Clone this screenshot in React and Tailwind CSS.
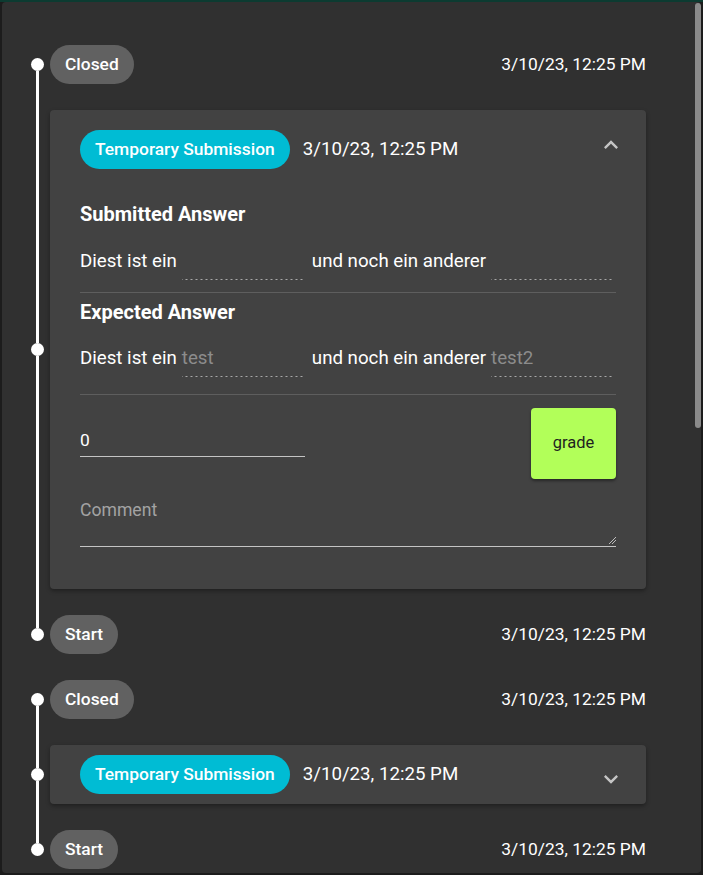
import React from 'react'

const DATE = '3/10/23, 12:25 PM'

function TimelineRow({ first, last, children }) {
  return (
    <div className="flex">
      <div className="flex w-[13px] shrink-0 flex-col items-center">
        <div className={`w-[3px] flex-1 ${first ? '' : 'bg-white'}`} />
        <div className="h-[13px] w-[13px] shrink-0 rounded-full bg-white" />
        <div className={`w-[3px] flex-1 ${last ? '' : 'bg-white'}`} />
      </div>
      <div className="ml-[6px] min-w-0 flex-1 py-[13px]">{children}</div>
    </div>
  )
}

function StateRow({ label }) {
  return (
    <div className="flex items-center justify-between">
      <span className="flex h-[39px] items-center rounded-full bg-[#616161] px-[15px] text-[17.4px] font-medium text-white">
        {label}
      </span>
      <span className="text-[17.4px] text-white">{DATE}</span>
    </div>
  )
}

function Chevron({ up }) {
  return (
    <svg viewBox="0 0 24 24" className="h-[28px] w-[28px] fill-[#c4c4c4]">
      {up ? (
        <path d="M12 8l-6 6 1.41 1.41L12 10.83l4.59 4.58L18 14z" />
      ) : (
        <path d="M16.59 8.59L12 13.17 7.41 8.59 6 10l6 6 6-6z" />
      )}
    </svg>
  )
}

function SubmissionChip() {
  return (
    <span className="flex h-[39px] shrink-0 items-center rounded-full bg-[#00bcd4] px-[15px] text-[17.4px] font-medium text-white">
      Temporary Submission
    </span>
  )
}

function Blank({ value }) {
  return (
    <span className="ml-[5px] mr-[8px] inline-block h-[37px] w-[122px] shrink-0 bg-[linear-gradient(to_right,#a8a8a8_40%,transparent_0)] bg-[length:5px_1px] bg-bottom bg-repeat-x leading-[36px] text-[#8c8c8c]">
      {value}
    </span>
  )
}

function ClozeRow({ a, b }) {
  return (
    <div className="flex h-[37px] whitespace-nowrap text-[18.7px] leading-[36px] text-white">
      <span>Diest ist ein</span>
      <Blank value={a} />
      <span>und noch ein anderer</span>
      <Blank value={b} />
    </div>
  )
}

function OpenCard() {
  return (
    <div className="rounded-[4px] bg-[#424242] shadow-[0_2px_4px_rgba(0,0,0,0.35)]">
      <div className="flex items-center pl-[30px] pr-[21px] pt-[20px]">
        <SubmissionChip />
        <span className="ml-[13px] text-[18.7px] text-white">{DATE}</span>
        <div className="ml-auto -mt-[10px]">
          <Chevron up />
        </div>
      </div>
      <div className="px-[30px] pb-[42px]">
        <h3 className="mt-[33px] text-[20px] font-bold leading-[24px] text-white">Submitted Answer</h3>
        <div className="mt-[17px]">
          <ClozeRow a="" b="" />
        </div>
        <div className="mt-[12px] h-px bg-[#5e5e5e]" />
        <h3 className="mt-[7px] text-[20px] font-bold leading-[24px] text-white">Expected Answer</h3>
        <div className="mt-[16px]">
          <ClozeRow a="test" b="test2" />
        </div>
        <div className="mt-[17px] h-px bg-[#5e5e5e]" />
        <div className="mt-[13px] flex items-start justify-between">
          <div className="pt-[20px]">
            <div className="h-[29px] w-[225px] border-b border-[#c4c4c4] text-[17.4px] leading-[24px] text-white">0</div>
          </div>
          <button className="h-[71px] w-[85px] rounded-[4px] bg-[#b2ff59] text-[16.5px] text-[#1f1f1f] shadow-[0_2px_3px_rgba(0,0,0,0.4)]">
            grade
          </button>
        </div>
        <div className="mt-[19px] text-[17.6px] leading-[24px] text-[#a3a3a3]">Comment</div>
        <div className="flex h-[25px] items-end justify-end border-b border-[#c4c4c4] pb-[2px]">
          <svg viewBox="0 0 7 7" className="h-[7px] w-[7px] stroke-[#bdbdbd]" strokeWidth="1">
            <path d="M0 7L7 0M3 7L7 3" />
          </svg>
        </div>
      </div>
    </div>
  )
}

function ClosedCard() {
  return (
    <div className="flex items-center rounded-[4px] bg-[#424242] py-[10px] pl-[30px] pr-[21px] shadow-[0_2px_4px_rgba(0,0,0,0.35)]">
      <SubmissionChip />
      <span className="ml-[13px] text-[18.7px] text-white">{DATE}</span>
      <div className="ml-auto mt-[8px]">
        <Chevron />
      </div>
    </div>
  )
}

function Group({ open }) {
  return (
    <div>
      <TimelineRow first>
        <StateRow label="Closed" />
      </TimelineRow>
      <TimelineRow>{open ? <OpenCard /> : <ClosedCard />}</TimelineRow>
      <TimelineRow last>
        <StateRow label="Start" />
      </TimelineRow>
    </div>
  )
}

export default function App() {
  return (
    <div className="h-[875px] w-[703px] overflow-hidden bg-[#1c1c1c] font-['Roboto',sans-serif]">
      <div className="h-[2px] bg-[#0c3b31]" />
      <div className="relative ml-[2px] h-[871px] w-[699px] overflow-hidden rounded-[4px] bg-[#303030] pl-[29px] pr-[55px] pt-[30px]">
        <Group open />
        <Group />
        <div className="absolute right-[0px] top-[1px] h-[425px] w-[6px] rounded-full bg-[#8a8a8a]" />
      </div>
    </div>
  )
}
